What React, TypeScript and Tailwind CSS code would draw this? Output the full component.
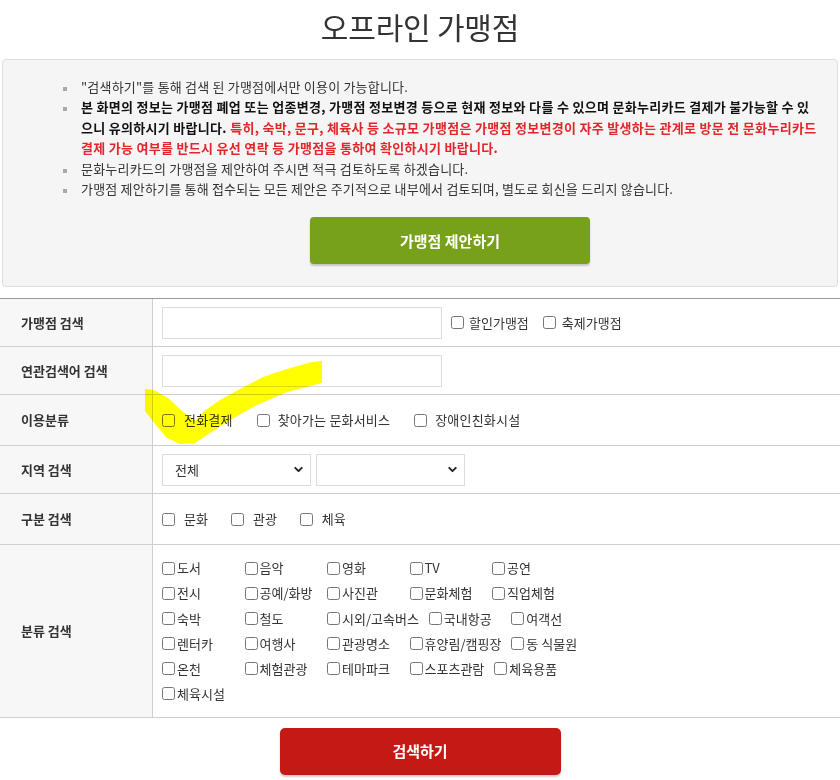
import { ChevronDown } from "lucide-react"

const font = { fontFamily: '"Noto Sans CJK KR", "Noto Sans", sans-serif' }

function Check({ label, gap = "ml-[9px]" }: { label: string; gap?: string }) {
  return (
    <label className="inline-flex items-center">
      <input type="checkbox" className="m-0 h-[13px] w-[13px] shrink-0" />
      <span className={gap}>{label}</span>
    </label>
  )
}

function Row({
  label,
  height,
  children,
}: {
  label: string
  height: string
  children: React.ReactNode
}) {
  return (
    <div className={`flex border-b border-[#cfcfcf] ${height}`}>
      <div className="w-[153px] shrink-0 flex items-center pl-[21px] bg-[#f7f7f7] border-r border-[#cfcfcf] font-bold text-[#333]">
        {label}
      </div>
      <div className="flex-1 flex items-center pl-[9px]">{children}</div>
    </div>
  )
}

const categories = [
  "도서", "음악", "영화", "TV", "공연",
  "전시", "공예/화방", "사진관", "문화체험", "직업체험",
  "숙박", "철도", "시외/고속버스", "국내항공", "여객선",
  "렌터카", "여행사", "관광명소", "휴양림/캠핑장", "동 식물원",
  "온천", "체험관광", "테마파크", "스포츠관람", "체육용품",
  "체육시설",
]

function Select({ value }: { value?: string }) {
  return (
    <div className="w-[149px] h-[32px] border border-[#dcdcdc] bg-white flex items-center justify-between pl-[12px] pr-[5px]">
      <span className="text-[#333]">{value}</span>
      <ChevronDown className="h-[13px] w-[13px] text-[#222]" strokeWidth={3.5} />
    </div>
  )
}

function Bullet() {
  return <span className="w-[4px] h-[4px] bg-[#a8a8a8] mt-[10px] mr-[14px] shrink-0" />
}

export default function App() {
  return (
    <div className="relative w-[840px] h-[780px] overflow-hidden bg-white text-[13px] text-[#333]" style={font}>
      <div className="h-[59px] flex justify-center pt-[6px]">
        <h1 className="text-[30px] leading-[40px] font-normal text-[#333] tracking-[-0.2px]">오프라인 가맹점</h1>
      </div>

      <div className="mx-[2px] h-[228px] bg-[#f5f5f5] border border-[#dedede] rounded-[4px] pt-[17px]">
        <ul className="pl-[60px] pr-[4px] leading-[20.4px] tracking-[0.2px]">
          <li className="flex">
            <Bullet />
            <span>"검색하기"를 통해 검색 된 가맹점에서만 이용이 가능합니다.</span>
          </li>
          <li className="flex">
            <Bullet />
            <span className="font-bold text-[#111] tracking-[0.3px] whitespace-nowrap">
              본 화면의 정보는 가맹점 폐업 또는 업종변경, 가맹점 정보변경 등으로 현재 정보와 다를 수 있으며 문화누리카드 결제가 불가능할 수 있
              <br />
              으니 유의하시기 바랍니다.{" "}
              <span className="text-[#e3262b]">
                특히, 숙박, 문구, 체육사 등 소규모 가맹점은 가맹점 정보변경이 자주 발생하는 관계로 방문 전 문화누리카드
                <br />
                결제 가능 여부를 반드시 유선 연락 등 가맹점을 통하여 확인하시기 바랍니다.
              </span>
            </span>
          </li>
          <li className="flex">
            <Bullet />
            <span>문화누리카드의 가맹점을 제안하여 주시면 적극 검토하도록 하겠습니다.</span>
          </li>
          <li className="flex">
            <Bullet />
            <span>가맹점 제안하기를 통해 접수되는 모든 제안은 주기적으로 내부에서 검토되며, 별도로 회신을 드리지 않습니다.</span>
          </li>
        </ul>
        <div className="flex justify-center pl-[60px] mt-[18px]">
          <button className="w-[280px] h-[47px] rounded-[4px] bg-[#78a11b] text-white text-[15px] font-bold shadow-[0_2px_2px_rgba(0,0,0,0.2)]">
            가맹점 제안하기
          </button>
        </div>
      </div>

      <div className="mt-[11px] border-t border-[#999]">
        <Row label="가맹점 검색" height="h-[48px]">
          <input type="text" className="w-[280px] h-[32px] border border-[#dcdcdc] bg-white mr-[9px]" />
          <div className="flex gap-[14px]">
            <Check label="할인가맹점" gap="ml-[5px]" />
            <Check label="축제가맹점" gap="ml-[6px]" />
          </div>
        </Row>
        <Row label="연관검색어 검색" height="h-[48px]">
          <input type="text" className="w-[280px] h-[32px] border border-[#dcdcdc] bg-white" />
        </Row>
        <Row label="이용분류" height="h-[51px]">
          <div className="flex gap-[24px] tracking-[0.2px]">
            <Check label="전화결제" />
            <Check label="찾아가는 문화서비스" gap="ml-[8px]" />
            <Check label="장애인친화시설" gap="ml-[8px]" />
          </div>
        </Row>
        <Row label="지역 검색" height="h-[48px]">
          <div className="flex gap-[5px]">
            <Select value="전체" />
            <Select />
          </div>
        </Row>
        <Row label="구분 검색" height="h-[51px]">
          <div className="flex gap-[23px]">
            <Check label="문화" />
            <Check label="관광" />
            <Check label="체육" />
          </div>
        </Row>
        <Row label="분류 검색" height="h-[173px]">
          <div className="w-[440px] flex flex-wrap py-[11px]">
            {categories.map((c) => (
              <label key={c} className="inline-flex items-center h-[25.2px] min-w-[72.5px] mr-[10px]">
                <input type="checkbox" className="m-0 h-[13px] w-[13px] shrink-0" />
                <span className="ml-[2px]">{c}</span>
              </label>
            ))}
          </div>
        </Row>
      </div>

      <div className="flex justify-center mt-[10px]">
        <button className="w-[281px] h-[47px] rounded-[5px] bg-[#c41915] text-white text-[15px] font-bold shadow-[0_2px_2px_rgba(0,0,0,0.2)]">
          검색하기
        </button>
      </div>

      <svg
        className="absolute left-0 top-0 pointer-events-none mix-blend-multiply"
        width="840"
        height="780"
        viewBox="0 0 840 780"
      >
        <path
          d="M145,389 L154,390 L168,398 L181,410 L195,421 L203,412 L220,400 L240,389 L263,377 L287,369 L312,362 L322,361 L322,383 L287,392 L257,405 L230,420 L210,433 L195,443 L180,444 L167,438 L155,424 L145,411 Z"
          fill="#ffff00"
        />
      </svg>
    </div>
  )
}
